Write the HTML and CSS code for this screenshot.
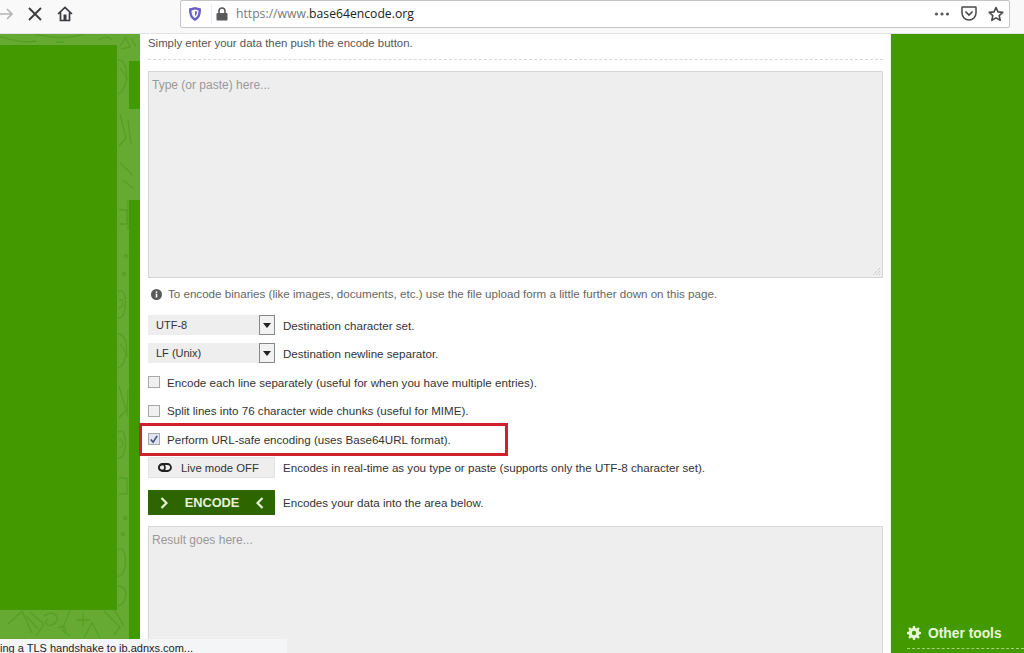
FILE: index.html
```html
<!DOCTYPE html>
<html lang="en">
<head>
<meta charset="utf-8">
<title>Base64 Encode</title>
<link rel="stylesheet" href="styles.css">
</head>
<body>
<header class="toolbar">
  <svg class="nav nav-forward" width="16" height="16" viewBox="0 0 16 16"><path d="M1 8h13M9 3l5 5-5 5" fill="none" stroke="#b4b4b6" stroke-width="1.6"/></svg>
  <svg class="nav nav-stop" width="16" height="16" viewBox="0 0 16 16"><path d="M2 2l12 12M14 2L2 14" fill="none" stroke="#3b3b3d" stroke-width="1.8"/></svg>
  <svg class="nav nav-home" width="16" height="16" viewBox="0 0 16 16"><path d="M1 8l7-6.500L15 8M3.500 6.500V14.500h9V6.500" fill="none" stroke="#3b3b3d" stroke-width="1.700"/><rect x="6.500" y="8.500" width="3" height="6" fill="#3b3b3d"/></svg>
  <div class="urlbar">
    <svg class="shield" width="14" height="16" viewBox="0 0 14 16"><path d="M7 1l6 1.500c0 6-1 10-6 12.500C2 12.500 1 8.500 1 2.500z" fill="#6a5fc0"/><path d="M7 3.500l3.500 1c0 3.500-.8 6-3.500 7.500-2.700-1.500-3.500-4-3.500-7.500z" fill="#fff"/><path d="M7 5l2 .5c0 2-.5 3.500-2 4.500z" fill="#6a5fc0"/></svg>
    <span class="urlbar-sep"></span>
    <svg class="lock" width="12" height="14" viewBox="0 0 12 14"><path d="M3 6V4a3 3 0 0 1 6 0v2" fill="none" stroke="#59595b" stroke-width="1.600"/><rect x="0.500" y="6" width="11" height="7.500" rx="1" fill="#59595b"/></svg>
    <span class="url"><span class="url-dim">https://www.</span>base64encode.org</span>
    <span class="urlbar-actions">
      <svg width="16" height="6" viewBox="0 0 16 6"><circle cx="2.500" cy="3" r="1.600" fill="#59595b"/><circle cx="8" cy="3" r="1.600" fill="#59595b"/><circle cx="13.500" cy="3" r="1.600" fill="#59595b"/></svg>
      <svg width="16" height="15" viewBox="0 0 16 15"><path d="M1.500 1h13a.5.5 0 0 1 .5.500V7a7 7 0 0 1-14 0V1.500a.5.500 0 0 1 .500-.500z" fill="none" stroke="#4a4a4c" stroke-width="1.500"/><path d="M4.500 5.500L8 9l3.500-3.500" fill="none" stroke="#4a4a4c" stroke-width="1.700"/></svg>
      <svg width="16" height="16" viewBox="0 0 16 16"><path d="M8 1.500l2 4.400 4.800.5-3.600 3.200 1 4.700L8 11.900l-4.200 2.400 1-4.700L1.200 6.400 6 5.900z" fill="none" stroke="#4a4a4c" stroke-width="1.600" stroke-linejoin="round"/></svg>
    </span>
  </div>
</header>

<div class="page">
  <aside class="side-left">
    <svg class="doodles" width="140" height="605" viewBox="0 0 140 605">
      <g fill="none" stroke="#579f24" stroke-width="1.300">
        <path d="M0 3c12 2 24 7 36 4M34 0c20 4 36 6 52-1M56 8h8M98 6c6-4 12-3 14 0M120 12l6-9 4 10-9 2M131 4l5 9"/>
        <path d="M118 26c12 0 11 30 0 34"/><path d="M120 34l8 12"/>
        <path d="M120 80l6 24-7 8M128 86l3 24"/>
        <path d="M120 128c4 8 10 6 12 14M122 146c6 2 8 8 12 8"/>
        <path d="M119 176h8v14h-8M128 166v30"/>
        <circle cx="126" cy="222" r="1.500"/><circle cx="124" cy="240" r="1.500"/>
        <path d="M118 258c10-8 10 28 0 26M119 266c5-2 5 8 0 8"/>
        <path d="M118 300c12 0 11 30 0 34"/><path d="M120 310l8 12"/>
        <path d="M119 352l7 24-7 8M128 356l-1 26"/>
        <path d="M118 398c10-8 10 28 0 26M119 406c5-2 5 8 0 8"/>
        <path d="M119 444h8v16h-8"/>
        <circle cx="125" cy="484" r="1.500"/><circle cx="123" cy="500" r="1.500"/>
        <path d="M118 516c10-8 10 28 0 26"/>
        <path d="M118 552c12 0 9 18 0 20"/>
        <path d="M8 590l14-13 10 22M30 578l14 12-8 12M26 582l12 13"/>
        <path d="M44 582c10-8 18 2 10 8-5 4-12-2-6-5M58 594c6-4 10 0 6 5"/>
        <path d="M70 576l-8 20 8 6M76 586h14M83 579v14"/>
        <path d="M84 604l8-15 8 15M104 577l16 16-6 8M112 572l12 20"/>
      </g>
    </svg>
    <div class="ad-block"></div>
    <div class="ad-strip ad-strip-top"></div>
    <div class="ad-strip ad-strip-bottom"></div>
  </aside>

  <main class="content">
    <p class="intro">Simply enter your data then push the encode button.</p>
    <div class="textarea source">Type (or paste) here...
      <svg class="grip" width="9" height="9" viewBox="0 0 9 9"><path d="M8 1L1 8M8 4L4 8M8 7L7 8" stroke="#b5b5b5" stroke-width="1" stroke-dasharray="1 1"/></svg>
    </div>
    <p class="hint">
      <svg width="11" height="11" viewBox="0 0 11 11"><circle cx="5.500" cy="5.500" r="5.500" fill="#595959"/><rect x="4.700" y="4.700" width="1.600" height="3.800" fill="#fff"/><rect x="4.700" y="2.400" width="1.600" height="1.500" fill="#fff"/></svg>
      To encode binaries (like images, documents, etc.) use the file upload form a little further down on this page.
    </p>

    <div class="row row-select">
      <div class="select"><span class="select-value">UTF-8</span><span class="select-btn"></span></div>
      <span>Destination character set.</span>
    </div>
    <div class="row row-select">
      <div class="select"><span class="select-value">LF (Unix)</span><span class="select-btn"></span></div>
      <span>Destination newline separator.</span>
    </div>
    <div class="row row-check"><span class="check"></span><span>Encode each line separately (useful for when you have multiple entries).</span></div>
    <div class="row row-check"><span class="check"></span><span>Split lines into 76 character wide chunks (useful for MIME).</span></div>
    <div class="row row-check row-marked">
      <span class="check checked"><svg width="11" height="11" viewBox="0 0 11 11"><path d="M2 5.500l2.500 3L9 1.500" fill="none" stroke="#4a4f7a" stroke-width="1.800"/></svg></span>
      <span>Perform URL-safe encoding (uses Base64URL format).</span>
      <span class="redbox"></span>
    </div>
    <div class="row row-live">
      <div class="live"><svg width="14" height="9" viewBox="0 0 14 9"><rect x="1" y="1" width="12" height="7" rx="3.500" fill="none" stroke="#222" stroke-width="1.800"/><circle cx="4" cy="4.500" r="3" fill="none" stroke="#222" stroke-width="1.600"/></svg>Live mode OFF</div>
      <span>Encodes in real-time as you type or paste (supports only the UTF-8 character set).</span>
    </div>
    <div class="row row-encode">
      <div class="encode">
        <svg width="8" height="12" viewBox="0 0 8 12"><path d="M1.500 1l5 5-5 5" fill="none" stroke="#e6f2d8" stroke-width="2.200"/></svg>
        <span>ENCODE</span>
        <svg width="8" height="12" viewBox="0 0 8 12"><path d="M6.500 1l-5 5 5 5" fill="none" stroke="#e6f2d8" stroke-width="2.200"/></svg>
      </div>
      <span>Encodes your data into the area below.</span>
    </div>
    <div class="textarea result">Result goes here...</div>
  </main>

  <aside class="side-right">
    <div class="tools"><svg width="14" height="14" viewBox="0 0 14 14"><path d="M6 0h2l.4 1.900 1.300.5L11.300 1.300l1.400 1.400-1.100 1.600.5 1.300L14 6v2l-1.900.4-.5 1.300 1.100 1.600-1.400 1.400-1.600-1.100-1.300.5L8 14H6l-.4-1.900-1.300-.5-1.600 1.100-1.400-1.400 1.100-1.600-.5-1.300L0 8V6l1.900-.4.500-1.300L1.300 2.700l1.400-1.400 1.600 1.100 1.300-.5z" fill="#e8f6da"/><circle cx="7" cy="7" r="2.200" fill="#429a00"/></svg>Other tools</div>
  </aside>
</div>

<div class="status">ing a TLS handshake to ib.adnxs.com...</div>
</body>
</html>
```

FILE: styles.css
```css
* { box-sizing: border-box; }
html, body { margin: 0; height: 653px; overflow: hidden; }
body { position: relative; font-family: "Liberation Sans", Arial, sans-serif; font-size: 11.6px; color: #333; background: #fff; }
p { margin: 0; }

.toolbar { height: 34px; background: #f9f9fa; display: flex; align-items: center; padding-bottom: 6px; border-bottom: 1px solid #e4e4e6; }
.nav { flex: none; }
.nav-forward { margin-left: -2px; }
.nav-stop { margin-left: 13px; }
.nav-home { margin-left: 14px; }
.urlbar { margin-left: 107px; width: 830px; height: 28px; background: #fff; border: 1px solid #c4c4c6; border-radius: 2px; display: flex; align-items: center; padding-left: 7px; }
.urlbar-sep { width: 1px; height: 20px; background: #ececee; margin-left: 9px; margin-right: 4px; }
.url { margin-left: 8px; font-family: "Open Sans", "Liberation Sans", sans-serif; font-size: 12.2px; color: #222; }
.url-dim { color: #77777a; }
.urlbar-actions { margin-left: auto; margin-right: 5px; display: flex; align-items: center; gap: 11px; }

.page { display: flex; height: 619px; }
.side-left { width: 140px; flex: none; background: #66aa33; position: relative; }
.doodles { position: absolute; left: 0; top: 0; }
.ad-block { position: relative; width: 117px; height: 565px; top: 11px; background: #429a00; }
.ad-strip { position: absolute; left: 129px; width: 11px; background: #429a00; }
.ad-strip-top { top: 27px; height: 48px; }
.ad-strip-bottom { top: 166px; height: 439px; }

.content { width: 750px; flex: none; background: #fff; padding: 3px 7px 0 8px; color: #333; }
.intro { height: 23px; line-height: 13px; font-size: 11.4px; color: #555; border-bottom: 1px dashed #d8d8d8; }
.textarea { background: #eee; border: 1px solid #d6d6d6; color: #999; font-size: 12px; padding: 6px 3px; position: relative; margin-top: 11px; }
.source { height: 207px; }
.grip { position: absolute; right: 1px; bottom: 1px; }
.hint { margin-top: 9px; height: 14px; line-height: 14px; color: #666; padding-left: 3px; display: flex; align-items: center; gap: 6px; }
.row { display: flex; align-items: center; position: relative; color: #333; }
.row-select { height: 20px; gap: 8px; }
.hint + .row-select { margin-top: 14px; }
.row-select + .row-select { margin-top: 8px; }
.select { width: 127px; height: 20px; display: flex; background: #eee; }
.select-value { flex: 1; padding-left: 8px; line-height: 20px; font-size: 11px; color: #333; }
.select-btn { width: 16px; height: 20px; background: #f2f2f2; border: 1px solid #888; position: relative; }
.select-btn::after { content: ""; position: absolute; left: 3px; top: 7px; border: 4px solid transparent; border-top: 5px solid #222; border-bottom: 0; }
.row-check { height: 14px; gap: 7px; }
.row-select + .row-check { margin-top: 12px; }
.row-check + .row-check { margin-top: 14.5px; }
.check { width: 12px; height: 12px; flex: none; background: #f0f0f0; border: 1px solid #a8a8a8; display: flex; align-items: center; justify-content: center; }
.checked { background: #dfe3f2; }
.redbox { position: absolute; left: -9px; top: -9px; width: 369px; height: 33px; border: 3px solid #d0202c; }
.row-live { margin-top: 11px; height: 21px; gap: 8px; }
.live { width: 127px; height: 21px; background: #eee; border: 1px solid #e2e2e2; display: flex; align-items: center; gap: 9px; padding-left: 9px; font-size: 11.3px; color: #333; }
.row-encode { margin-top: 12px; height: 25px; gap: 8px; }
.encode { width: 127px; height: 25px; background: #2d6600; color: #e6f2d8; font-weight: 700; font-size: 12.8px; display: flex; align-items: center; justify-content: space-between; padding: 0 11px 0 12px; }
.result { height: 130px; margin-top: 11px; }

.side-right { flex: 1; background: #429a00; border-left: 1px solid #e9f5df; position: relative; }
.tools { position: absolute; left: 16px; right: 0; top: 590px; height: 25px; color: #e8f6da; font-weight: 700; font-size: 13.800px; display: flex; align-items: flex-start; gap: 7px; border-bottom: 1px dashed #a5d07d; padding-top: 2px; line-height: 16px; }

.status { position: absolute; left: 0; bottom: 0; width: 287px; height: 14px; background: #f4f5f6; font-size: 11px; color: #222; line-height: 19px; white-space: nowrap; overflow: hidden; }
```
